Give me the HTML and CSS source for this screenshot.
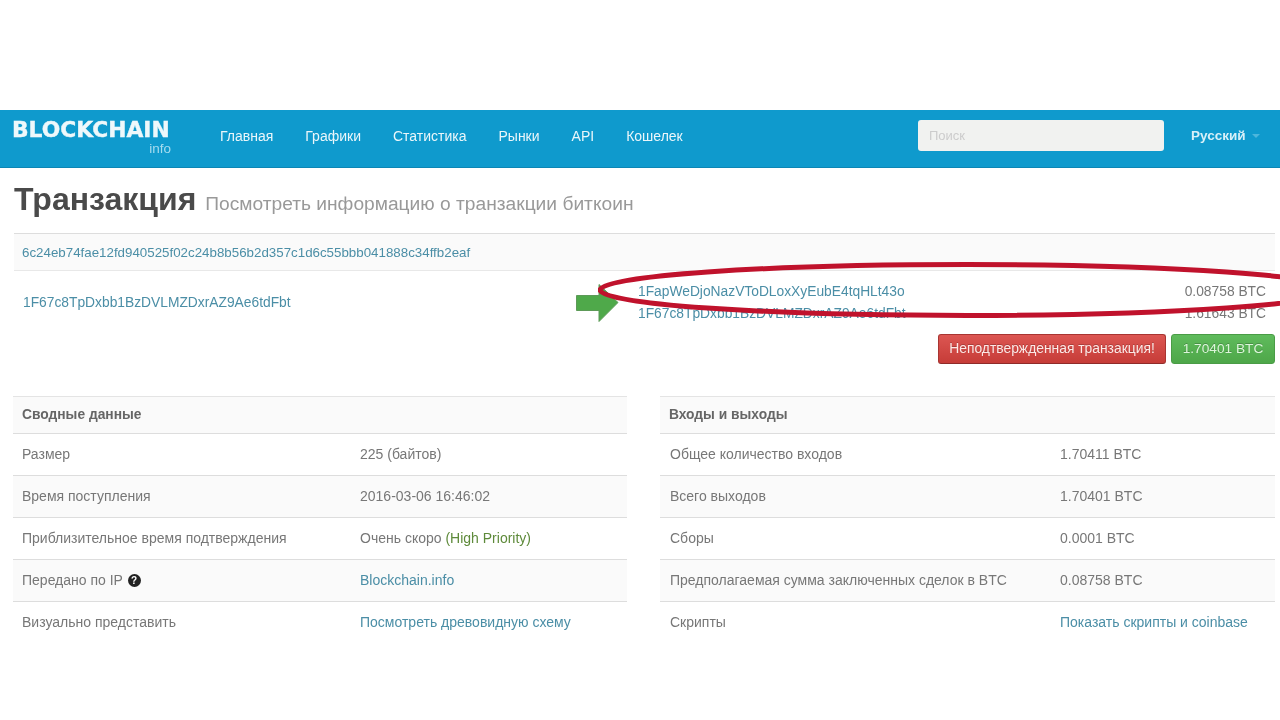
FILE: index.html
```html
<!DOCTYPE html>
<html>
<head>
<meta charset="utf-8">
<title>Транзакция</title>
<link rel="stylesheet" href="styles.css">
</head>
<body>
<div class="navbar">
  <a class="brand" href="#">BLOCKCHAIN<small>info</small></a>
  <ul class="nav">
    <li><a href="#">Главная</a></li>
    <li><a href="#">Графики</a></li>
    <li><a href="#">Статистика</a></li>
    <li><a href="#">Рынки</a></li>
    <li><a href="#">API</a></li>
    <li><a href="#">Кошелек</a></li>
  </ul>
  <input class="search" type="text" placeholder="Поиск">
  <a class="lang" href="#">Русский<span class="caret"></span></a>
</div>
<div class="container">
  <div class="page-header">
    <h1>Транзакция</h1>
    <span class="lead">Посмотреть информацию о транзакции биткоин</span>
  </div>
  <div class="tx-hash"><a href="#">6c24eb74fae12fd940525f02c24b8b56b2d357c1d6c55bbb041888c34ffb2eaf</a></div>
  <div class="tx-body">
    <div class="tx-from"><a href="#">1F67c8TpDxbb1BzDVLMZDxrAZ9Ae6tdFbt</a></div>
    <svg class="arrow" width="43" height="38" viewBox="0 0 43 38"><path d="M0.5 11.5H23V0.5L42 18.5 23 37.5V26.5H0.5Z" fill="#4fa94a" stroke="#5d9a58" stroke-width="1"/></svg>
    <div class="tx-out">
      <div class="out-row"><a href="#">1FapWeDjoNazVToDLoxXyEubE4tqHLt43o</a><span>0.08758 BTC</span></div>
      <div class="out-row"><a href="#">1F67c8TpDxbb1BzDVLMZDxrAZ9Ae6tdFbt</a><span>1.61643 BTC</span></div>
    </div>
    <svg class="ring" width="682" height="60" viewBox="0 0 682 60"><ellipse cx="369" cy="30" rx="367" ry="25.5" fill="none" stroke="#c0122c" stroke-width="5"/></svg>
  </div>
  <div class="tx-btns">
    <button class="btn btn-red">Неподтвержденная транзакция!</button>
    <button class="btn btn-green">1.70401 BTC</button>
  </div>
  <div class="tables">
    <table class="info">
      <colgroup><col class="c1"><col></colgroup>
      <tr><th colspan="2">Сводные данные</th></tr>
      <tr><td>Размер</td><td>225 (байтов)</td></tr>
      <tr><td>Время поступления</td><td>2016-03-06 16:46:02</td></tr>
      <tr><td>Приблизительное время подтверждения</td><td>Очень скоро <span class="green">(High Priority)</span></td></tr>
      <tr><td>Передано по IP <span class="help">?</span></td><td><a href="#">Blockchain.info</a></td></tr>
      <tr><td>Визуально представить</td><td><a href="#">Посмотреть древовидную схему</a></td></tr>
    </table>
    <table class="info io">
      <colgroup><col class="c1"><col></colgroup>
      <tr><th colspan="2">Входы и выходы</th></tr>
      <tr><td>Общее количество входов</td><td>1.70411 BTC</td></tr>
      <tr><td>Всего выходов</td><td>1.70401 BTC</td></tr>
      <tr><td>Сборы</td><td>0.0001 BTC</td></tr>
      <tr><td>Предполагаемая сумма заключенных сделок в BTC</td><td>0.08758 BTC</td></tr>
      <tr><td>Скрипты</td><td><a href="#">Показать скрипты и coinbase</a></td></tr>
    </table>
  </div>
</div>
</body>
</html>
```
FILE: styles.css
```css
body {
  margin: 0;
  background: #fff;
  font-family: "Liberation Sans", Arial, sans-serif;
  font-size: 14px;
  color: #777;
  overflow: hidden;
}
a { color: #4b8ea6; text-decoration: none; }

/* the source is a soft video frame */
.navbar, .container { filter: blur(0.45px); }

.navbar {
  margin-top: 110px;
  height: 58px;
  padding-bottom: 6px;
  background: #0f9acd;
  border-bottom: 1px solid #0c86b4;
  box-sizing: border-box;
  display: flex;
  align-items: center;
  color: #fff;
}
.brand {
  margin-left: 12px;
  margin-top: 3px;
  width: 159px;
  color: #eef8fb;
  font-family: "DejaVu Sans", sans-serif;
  font-weight: 700;
  font-size: 21.8px;
  line-height: 24px;
  -webkit-text-stroke: 0.4px #eef8fb;
  white-space: nowrap;
  display: flex;
  flex-direction: column;
}
.brand small {
  align-self: flex-end;
  font-family: "Liberation Sans", sans-serif;
  font-weight: 400;
  font-size: 13.5px;
  line-height: 14px;
  color: #a5dcef;
  -webkit-text-stroke: 0;
}
.nav {
  list-style: none;
  margin: 0 0 0 49px;
  padding: 0;
  display: flex;
  gap: 32px;
  flex: 1;
}
.nav a { color: #eaf6fa; font-size: 14px; }
.search {
  width: 246px;
  height: 31px;
  box-sizing: border-box;
  margin-right: 27px;
  padding: 0 11px;
  border: 0;
  border-radius: 3px;
  background: #f1f2f0;
  font-family: inherit;
  font-size: 13px;
}
.search::placeholder { color: #ccc; }
.lang {
  width: 89px;
  color: #d8f0f8;
  font-size: 13.5px;
  font-weight: 700;
}
.caret {
  display: inline-block;
  margin-left: 6px;
  vertical-align: 2px;
  border: 4px solid transparent;
  border-top-color: #4db6dc;
  border-bottom: 0;
}

.container { padding: 0 5px 0 14px; }
.page-header {
  height: 65px;
  box-sizing: border-box;
  padding-top: 13px;
  white-space: nowrap;
}
.page-header h1 {
  display: inline;
  margin: 0 5px 0 0;
  font-size: 32px;
  color: #4a4a4a;
}
.lead { font-size: 19.2px; color: #999; }

.tx-hash {
  height: 38px;
  line-height: 37px;
  border-top: 1px solid #ddd;
  border-bottom: 1px solid #e8e8e8;
  box-sizing: border-box;
  padding-left: 8px;
  background: #fafafa;
  font-size: 13.33px;
}
.tx-body {
  position: relative;
  display: flex;
  height: 61px;
  padding-left: 9px;
  font-size: 13.8px;
}
.tx-from { width: 553px; padding-top: 24px; }
.arrow { margin-top: 13px; flex: none; }
.tx-out { flex: 1; padding-left: 19px; padding-top: 12px; }
.out-row {
  display: flex;
  justify-content: space-between;
  height: 22px;
  line-height: 18px;
  padding-right: 9px;
}
.ring { position: absolute; left: 584px; top: -11px; }

.tx-btns {
  display: flex;
  justify-content: flex-end;
  gap: 5px;
  margin-top: 2px;
}
.btn {
  height: 30px;
  border: 1px solid #a83532;
  border-bottom-color: #8f2b29;
  border-radius: 3px;
  font-family: inherit;
  font-size: 13.85px;
  padding: 0 0 2px;
  white-space: nowrap;
  text-shadow: 0 -1px 0 rgba(0, 0, 0, 0.2);
}
.btn-red {
  width: 228px;
  color: #fde8e6;
  background: linear-gradient(#dc5652, #c63c38);
}
.btn-green {
  width: 104px;
  font-size: 13.7px;
  color: #dcf5da;
  background: linear-gradient(#5fbb5c, #4ea749);
  border-color: #4a9c46;
}

.tables {
  display: flex;
  gap: 33px;
  margin-top: 32px;
  margin-left: -1px;
}
.info {
  width: 614px;
  border-collapse: collapse;
  table-layout: fixed;
}
.info.io { width: 615px; }
.info th {
  height: 35px;
  padding: 0 9px 1px;
  text-align: left;
  font-size: 13.8px;
  font-weight: 700;
  color: #666;
  background: #fafafa;
  border-top: 1px solid #e4e4e4;
}
.info td {
  height: 39px;
  padding: 0 9px 2px;
  border-top: 1px solid #ddd;
  white-space: nowrap;
}
.info tr:nth-child(odd) td { background: #fafafa; }
/* col width leaves out the cell padding here */
.c1 { width: 338px; }
.io .c1 { width: 391px; }
.io td:first-child { padding-left: 10px; }
.green { color: #5e8a3a; }
.help {
  display: inline-block;
  width: 13px;
  height: 13px;
  margin-left: 1px;
  border-radius: 50%;
  background: #222;
  color: #fff;
  font-size: 10px;
  font-weight: 700;
  line-height: 13px;
  text-align: center;
  vertical-align: 1px;
}
```
